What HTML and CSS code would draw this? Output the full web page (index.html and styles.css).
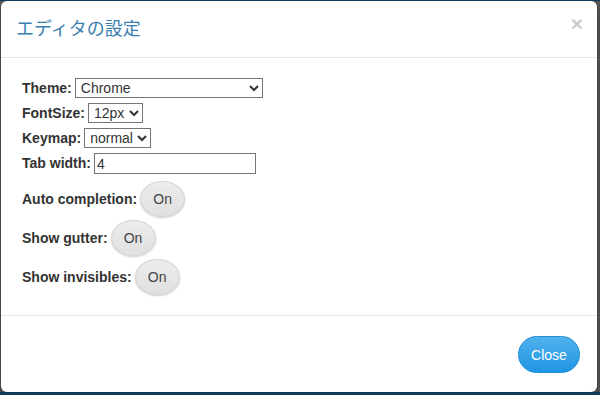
FILE: index.html
```html
<!DOCTYPE html>
<html lang="ja">

<head>
    <meta charset="UTF-8">
    <title>エディタの設定</title>
    <link rel="stylesheet" href="styles.css">
</head>

<body>

    <div class="modal">
        <div class="modal-header">
            <h4 class="modal-title">エディタの設定</h4>
            <button type="button" class="close">&times;</button>
        </div>

        <div class="modal-body">
            <div class="row">
                <label for="theme">Theme:</label>
                <select id="theme" class="theme-select">
                    <option>Chrome</option>
                </select>
            </div>
            <div class="row">
                <label for="fontsize">FontSize:</label>
                <select id="fontsize">
                    <option>12px</option>
                </select>
            </div>
            <div class="row">
                <label for="keymap">Keymap:</label>
                <select id="keymap">
                    <option>normal</option>
                </select>
            </div>
            <div class="row">
                <label for="tabwidth">Tab width:</label>
                <input type="text" id="tabwidth" value="4">
            </div>

            <!-- toggles -->
            <div class="row toggle-row first-toggle">
                <label>Auto completion:</label>
                <button class="toggle">On</button>
            </div>
            <div class="row toggle-row">
                <label>Show gutter:</label>
                <button class="toggle">On</button>
            </div>
            <div class="row toggle-row">
                <label>Show invisibles:</label>
                <button class="toggle">On</button>
            </div>
        </div>

        <div class="modal-footer">
            <button class="btn-close">Close</button>
        </div>
    </div>

</body>

</html>
```

FILE: styles.css
```css
html {
    background: #0d3c58;
}

body {
    margin: 0;
    padding: 1px 3px 2px 1px;
    height: 392px;
    background: #5c5c5c;
    border-top: 1px solid #0d3c58;
    box-sizing: border-box;
    font-family: "Liberation Sans", Arial, sans-serif;
    font-size: 14px;
    color: #333;
}

.modal {
    background: #fff;
    border-radius: 6px;
    height: 391px;
    margin-top: -1px;
    display: flex;
    flex-direction: column;
    box-shadow: 0 3px 9px rgba(0, 0, 0, 0.5);
}

.modal-header {
    display: flex;
    justify-content: space-between;
    align-items: flex-start;
    padding: 15px 14px 15px 15px;
    border-bottom: 1px solid #e5e5e5;
}

.modal-title {
    margin: 0;
    font-family: "Liberation Sans", "Noto Sans CJK JP", sans-serif;
    font-size: 18px;
    font-weight: normal;
    line-height: 26px;
    color: #3a7fb0;
}

.close {
    padding: 0;
    border: none;
    background: none;
    font-family: "Liberation Sans", Arial, sans-serif;
    font-size: 21px;
    font-weight: bold;
    line-height: 1;
    color: #000;
    opacity: 0.2;
    margin-top: -3px;
}

.modal-body {
    flex: 1;
    padding: 17px 21px 0 21px;
}

.row {
    display: flex;
    align-items: center;
    gap: 3px;
    height: 25px;
}

.row label {
    font-weight: bold;
    font-size: 14px;
    color: #333;
}

select,
input {
    font-family: "Liberation Sans", Arial, sans-serif;
    font-size: 14px;
    color: #333;
    height: 20px;
    border: 1px solid #767676;
    border-radius: 0;
    background: #fff;
    padding: 0 1px;
}

.theme-select {
    width: 188px;
}

input {
    width: 162px;
    height: 21px;
    box-sizing: border-box;
    padding: 0 2px;
    margin-top: 2px;
}

.toggle-row {
    height: 39px;
    gap: 3px;
}

.first-toggle {
    margin-top: 4px;
}

.toggle {
    width: 45px;
    height: 36px;
    border-radius: 50%;
    border: 1px solid #d4d4d4;
    background: linear-gradient(#ececec, #e0e0e0);
    box-shadow: 0 1px 2px rgba(0, 0, 0, 0.2);
    font-family: "Liberation Sans", Arial, sans-serif;
    font-size: 14px;
    color: #444;
    padding: 0;
}

.modal-footer {
    display: flex;
    justify-content: flex-end;
    padding: 20px 17px 19px;
    border-top: 1px solid #e5e5e5;
}

.btn-close {
    width: 62px;
    height: 37px;
    border: 1px solid #1f8fd6;
    border-radius: 19px;
    background: linear-gradient(#52b2ee, #1e95e2);
    color: #fff;
    font-family: "Liberation Sans", Arial, sans-serif;
    font-size: 14px;
    padding: 0;
}
```
